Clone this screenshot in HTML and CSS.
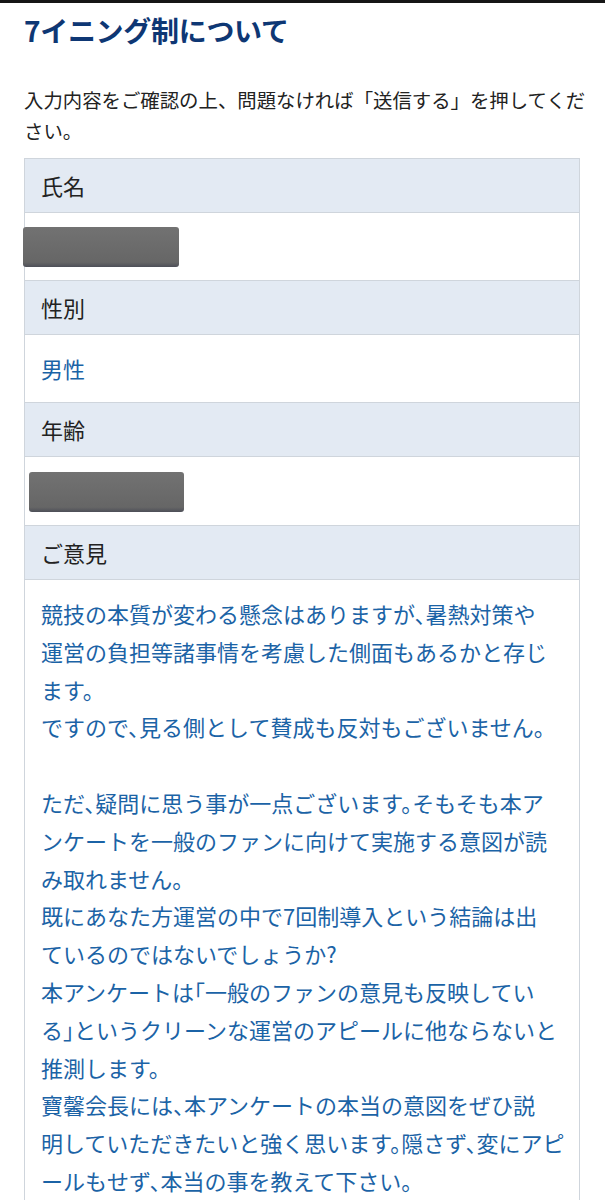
FILE: index.html
```html
<!DOCTYPE html>
<html lang="ja">
<head>
<meta charset="utf-8">
<title>7イニング制について</title>
<link rel="stylesheet" href="styles.css">
</head>
<body>
<div class="topbar"></div>
<main class="page">
  <h1 class="title">7イニング制について</h1>
  <p class="intro">入力内容をご確認の上、問題なければ「送信する」を押してくだ<br>さい。</p>
  <div class="confirm">
    <div class="label">氏名</div>
    <div class="value value--masked"><span class="mask mask--name"></span></div>
    <div class="label">性別</div>
    <div class="value">男性</div>
    <div class="label">年齢</div>
    <div class="value value--masked"><span class="mask mask--age"></span></div>
    <div class="label">ご意見</div>
    <div class="value value--text">競技の本質が変わる懸念はありますが、暑熱対策や<br>運営の負担等諸事情を考慮した側面もあるかと存じ<br>ます。<br>ですので、見る側として賛成も反対もございません。<br><br>ただ、疑問に思う事が一点ございます。そもそも本ア<br>ンケートを一般のファンに向けて実施する意図が読<br>み取れません。<br>既にあなた方運営の中で7回制導入という結論は出<br>ているのではないでしょうか?<br>本アンケートは「一般のファンの意見も反映してい<br>る」というクリーンな運営のアピールに他ならないと<br>推測します。<br>寶馨会長には、本アンケートの本当の意図をぜひ説<br>明していただきたいと強く思います。隠さず、変にアピ<br>ールもせず、本当の事を教えて下さい。</div>
  </div>
</main>
</body>
</html>
```
FILE: styles.css
```css
html, body {
  margin: 0;
  padding: 0;
  background: #ffffff;
}
body {
  font-family: "Noto Sans CJK JP", "Noto Sans", sans-serif;
  color: #222222;
}
.topbar {
  height: 3px;
  background: #161616;
}
.page {
  padding: 0 25px 0 24px;
}
.title {
  margin: 8px 0 0;
  font-size: 28px;
  line-height: 39px;
  font-weight: 700;
  color: #0e3774;
  letter-spacing: -0.3px;
}
.intro {
  margin: 34px -20px 0 0;
  font-size: 19.4px;
  line-height: 31px;
  color: #222222;
  white-space: nowrap;
}
.confirm {
  margin-top: 12px;
  border: 1px solid #cfd5dc;
  border-bottom: none;
}
.label {
  background: #e3eaf3;
  border-bottom: 1px solid #cfd5dc;
  padding: 10px 16px;
  font-size: 22px;
  line-height: 33px;
  color: #222222;
}
.value {
  border-bottom: 1px solid #cfd5dc;
  padding: 17px 16px;
  font-size: 22px;
  line-height: 33px;
  color: #1b63a6;
}
.value--masked {
  padding: 14px 16px 13px 0;
  display: flex;
}
.mask {
  display: block;
  height: 40px;
  background: linear-gradient(#727272, #666666 88%, #4d4f58 100%);
  border-radius: 3px;
}
.mask--name {
  width: 156px;
  margin-left: -2px;
}
.mask--age {
  width: 155px;
  margin-top: 1px;
  margin-left: 4px;
}
.value--text {
  padding: 15px 0 0 16px;
  line-height: 37.8px;
  white-space: nowrap;
  font-feature-settings: "halt";
}
```
